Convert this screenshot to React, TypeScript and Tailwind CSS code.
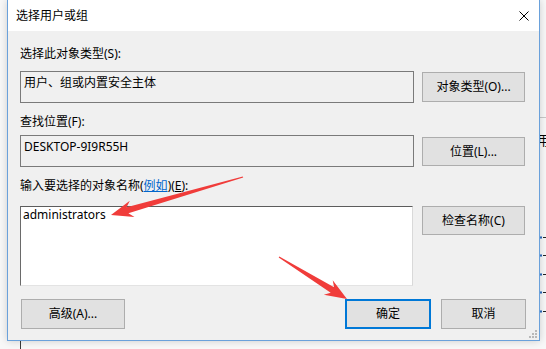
import React from "react";

type P = [number, number];

function arrowPoints(tail: P, tip: P, headLen = 22, headHalf = 8.5, neckHalf = 3.2, tailHalf = 0.6): string {
  const dx = tail[0] - tip[0];
  const dy = tail[1] - tip[1];
  const len = Math.hypot(dx, dy);
  const ux = dx / len;
  const uy = dy / len;
  const nx = -uy;
  const ny = ux;
  const at = (a: number, b: number): P => [tip[0] + ux * a + nx * b, tip[1] + uy * a + ny * b];
  const pts: P[] = [
    tip,
    at(headLen, headHalf),
    at(headLen * 0.78, neckHalf),
    [tail[0] + nx * tailHalf, tail[1] + ny * tailHalf],
    [tail[0] - nx * tailHalf, tail[1] - ny * tailHalf],
    at(headLen * 0.78, -neckHalf),
    at(headLen, -headHalf),
  ];
  return pts.map((p) => `${p[0].toFixed(1)},${p[1].toFixed(1)}`).join(" ");
}

const font = { fontFamily: '"Noto Sans", "Noto Sans CJK SC", sans-serif' };

function Btn({
  children,
  className = "",
  primary = false,
}: {
  children: React.ReactNode;
  className?: string;
  primary?: boolean;
}) {
  return (
    <div
      className={`flex items-center justify-center bg-[#e1e1e1] text-[12px] leading-[16px] text-black ${
        primary ? "border-2 border-[#0078d7]" : "border border-[#adadad]"
      } ${className}`}
    >
      {children}
    </div>
  );
}

export default function App() {
  return (
    <div
      className="relative w-[546px] h-[349px] overflow-hidden bg-[#f8f8f8] pl-[7px]"
      style={font}
    >
      {/* background details */}
      <div className="absolute left-[539px] top-[131px] w-[7px] h-[18px] overflow-hidden">
        <div className="ml-[-2px] text-[13px] leading-[18px] text-black">用</div>
      </div>
      <div className="absolute left-[539px] top-[117px] w-[7px] h-px bg-[#c8c8c8]" />
      <div className="absolute left-[20px] top-[341px] w-px h-[8px] bg-[#3a3a3a]" />
      {[236, 254, 273, 291, 310].map((y) => (
        <div key={y} className="absolute left-[540px] flex items-center gap-[1px]" style={{ top: y }}>
          <div className="w-[2px] h-[3px] rounded-full border border-[#2f6fc0]" />
          <div className="w-[4px] h-px bg-[#222]" />
        </div>
      ))}

      {/* dialog */}
      <div className="relative w-[533px] h-[341px] flex flex-col border-x border-b border-[#6aa1db] bg-[#f0f0f0] shadow-[0_0_8px_rgba(0,0,0,0.18)]">
        {/* title bar */}
        <div className="h-[31px] bg-white flex items-center justify-between pl-[8px] pr-[10px]">
          <span className="text-[12px] leading-[16px] text-black">选择用户或组</span>
          <svg width="10" height="10" viewBox="0 0 10 10">
            <path d="M0.5 0.5 L9.5 9.5 M9.5 0.5 L0.5 9.5" stroke="#000" strokeWidth="1" />
          </svg>
        </div>

        {/* content */}
        <div className="flex-1 flex flex-col pl-[12px] pr-[14px]">
          <div className="mt-[15px] text-[12px] leading-[16px] text-black">选择此对象类型(S):</div>
          <div className="mt-[9px] flex items-start gap-[8px]">
            <div className="w-[394px] h-[32px] border border-[#7a7a7a] bg-[#f0f0f0] pl-[3px] pt-[3px] text-[12px] leading-[16px] text-black">
              用户、组或内置安全主体
            </div>
            <Btn className="mt-[1px] w-[103px] h-[30px]">对象类型(O)...</Btn>
          </div>

          <div className="mt-[11px] text-[12px] leading-[16px] text-black">查找位置(F):</div>
          <div className="mt-[5px] flex items-start gap-[8px]">
            <div className="w-[394px] h-[32px] border border-[#7a7a7a] bg-[#f0f0f0] pl-[3px] pt-[3px] text-[12px] leading-[16px] text-black">
              DESKTOP-9I9R55H
            </div>
            <Btn className="mt-[2px] w-[103px] h-[29px]">位置(L)...</Btn>
          </div>

          <div className="mt-[11px] text-[12px] leading-[16px] text-black">
            输入要选择的对象名称(<span className="text-[#0066cc] underline">例如</span>)(<span className="underline">E</span>):
          </div>
          <div className="mt-[12px] flex items-start gap-[9px]">
            <div className="w-[393px] h-[80px] border-t border-l border-t-[#5c5c5c] border-l-[#6a6a6a] border-r border-b border-r-[#d9d9d9] border-b-[#e3e3e3] bg-white pl-[2px] text-[12px] leading-[16px] text-black">
              administrators
            </div>
            <Btn className="w-[103px] h-[29px]">检查名称(C)</Btn>
          </div>

          <div className="mt-[13px] flex items-start">
            <Btn className="ml-[1px] w-[104px] h-[30px]">高级(A)...</Btn>
            <div className="flex-1" />
            <Btn primary className="w-[86px] h-[30px]">确定</Btn>
            <Btn className="ml-[10px] w-[85px] h-[30px] mr-[-1px]">取消</Btn>
          </div>
        </div>

        {/* resize grip */}
        <svg className="absolute right-[2px] bottom-[2px]" width="8" height="8" viewBox="0 0 8 8">
          {[
            [6, 0],
            [6, 3],
            [3, 3],
            [6, 6],
            [3, 6],
            [0, 6],
          ].map(([x, y]) => (
            <rect key={`${x}-${y}`} x={x} y={y} width="2" height="2" fill="#b8b8b8" />
          ))}
        </svg>
      </div>

      {/* annotation arrows */}
      <svg className="absolute left-0 top-0 pointer-events-none" width="546" height="349" viewBox="0 0 546 349">
        <polygon points={arrowPoints([243, 177], [111, 215])} fill="#f03c3a" />
        <polygon points={arrowPoints([279, 257], [347, 299])} fill="#f03c3a" />
      </svg>
    </div>
  );
}
